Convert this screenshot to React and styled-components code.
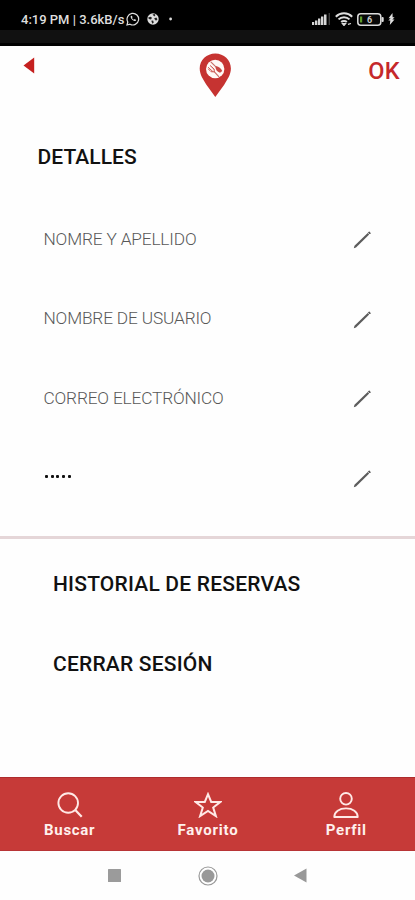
import React from "react";
import styled, { createGlobalStyle } from "styled-components";

const Global = createGlobalStyle`
  * { box-sizing: border-box; }
  body { margin: 0; background: #fefefe; font-family: Roboto, sans-serif; }
  svg { display: block; flex: none; }
`;

const Screen = styled.div`
  width: 415px;
  height: 900px;
  display: flex;
  flex-direction: column;
  overflow: hidden;
  background: #fefefe;
`;

const StatusBar = styled.div`
  flex: none;
  height: 46px;
  padding: 8px 20px 0 21px;
  display: flex;
  justify-content: space-between;
  align-items: flex-start;
  color: #dedede;
  background: linear-gradient(#000 30px, #111 30px, #111 43px, #000 43px);
`;

const StatusGroup = styled.div`
  display: flex;
  align-items: center;
  height: 22px;
  gap: ${(p) => p.$gap}px;
`;

const Clock = styled.span`
  font-size: 13px;
  font-weight: 500;
  white-space: nowrap;
  letter-spacing: 0;
  margin-right: -5px;
`;

const Header = styled.header`
  flex: none;
  height: 84px;
  padding: 7px 15px 0 23px;
  display: grid;
  grid-template-columns: 176px 34px 1fr;
  align-items: start;
`;

const BackButton = styled.button`
  border: 0;
  padding: 4px 0 0;
  background: none;
  justify-self: start;
`;

const OkButton = styled.button`
  border: 0;
  padding: 4px 0 0;
  background: none;
  justify-self: end;
  color: #c5282b;
  font: 500 23.5px/28px Roboto, sans-serif;
  letter-spacing: 0.3px;
`;

const Details = styled.section`
  flex: none;
  height: 409px;
  padding-top: 13px;
  border-bottom: 3px solid #e5d6d8;
`;

const Heading = styled.h1`
  margin: 0 0 0 37.5px;
  font-size: 21px;
  line-height: 28px;
  font-weight: 500;
  color: #111;
  letter-spacing: 0.05px;
`;

const Fields = styled.div`
  margin-top: 28px;
`;

const Field = styled.div`
  height: 79.6px;
  padding: 0 44px 0 43.5px;
  display: flex;
  align-items: center;
  justify-content: space-between;

  > svg {
    margin-top: 3px;
  }
`;

const FieldLabel = styled.span`
  font-size: 17.3px;
  line-height: 24px;
  font-weight: 300;
  color: #585858;
  letter-spacing: -0.17px;
`;

const Password = styled.span`
  display: flex;
  gap: 2.9px;
  padding-left: 1.2px;
  margin-top: -2px;
`;

const Dot = styled.i`
  width: 3px;
  height: 3.6px;
  border-radius: 1px;
  background: #111;
`;

const Links = styled.nav`
  flex: 1;
  padding: 5.5px 0 0 53px;
`;

const MenuLink = styled.a`
  display: flex;
  align-items: center;
  height: 79.5px;
  font-size: 21px;
  font-weight: 500;
  color: #111;
  letter-spacing: 0.2px;
`;

const TabBar = styled.nav`
  flex: none;
  height: 74px;
  padding: 14px 0 0 0.5px;
  display: grid;
  grid-template-columns: repeat(3, 138.3px);
  background: #c63a38;
  border-top: 1px solid #ad2c2d;
  border-bottom: 1px solid #b83436;
`;

const Tab = styled.a`
  display: flex;
  flex-direction: column;
  align-items: center;
  color: #ffe9e6;
`;

const TabLabel = styled.span`
  margin-top: 3px;
  font-size: 15px;
  line-height: 18px;
  font-weight: 700;
  color: #fff0ed;
  letter-spacing: ${(p) => p.$track}px;
`;

const SystemBar = styled.div`
  flex: none;
  height: 49px;
  display: grid;
  grid-template-columns: repeat(3, 93px);
  justify-content: center;
  justify-items: center;
  align-items: center;
`;

const WhatsappIcon = () => (
  <svg width="14" height="14" viewBox="0 0 14 14" fill="none" stroke="#ddd">
    <path d="M1 13l.8-3A5.8 5.8 0 1 1 4 12.2z" strokeWidth="1.2" />
    <path d="M4.8 4.1c-.9 1.9 2.4 5.3 4.7 5l.7-1.2-1.6-.9-.8.7C7 7.4 6.4 6.7 6 6l.6-.8-.7-1.4z" fill="#ddd" stroke="none" />
  </svg>
);

const GlobeIcon = () => (
  <svg width="12" height="12" viewBox="0 0 12 12">
    <circle cx="6" cy="6" r="5.7" fill="#ddd" />
    <path d="M1.2 4.5l2.3-.8 1.5 1-1 1.7-2.2-.4zM5.5 1.500l2-.6 1 1.200-1.200 1.300zM7 5.500l2.300-1 1.200 1.700-1.500 1.600zM4.300 7.800l1.800-.3.7 2-1.500 1.300z" fill="#222" />
  </svg>
);

const NotificationDot = () => (
  <svg width="8" height="4" viewBox="0 0 8 4"><circle cx="4.600" cy="2" r="1.400" fill="#ddd" /></svg>
);

const SignalIcon = () => (
  <svg width="19" height="12" viewBox="0 0 19 12" fill="#d5d5d5">
    <rect x="0" y="9" width="2.200" height="3" />
    <rect x="3" y="7.500" width="2.400" height="4.500" />
    <rect x="6" y="5.500" width="2.400" height="6.500" />
    <rect x="9" y="3.500" width="2.400" height="8.500" />
    <rect x="12" y="1.500" width="2.500" height="10.500" />
    <rect x="16.700" y="0" width="1" height="12" fill="#555" />
  </svg>
);

const WifiIcon = () => (
  <svg width="18" height="14" viewBox="0 0 18 14" fill="none" stroke="#ddd" strokeWidth="2">
    <path d="M.8 4.700C5.400.2 12.600.2 17.200 4.700M3.500 7.400c3-3 8-3 11 0M6.200 10c1.500-1.500 4.100-1.500 5.600 0" />
    <path d="M7.400 11.500h3.200L9 13.500zM13 12.300l3-.8" fill="#ddd" strokeWidth="1.200" />
  </svg>
);

const BatteryIcon = () => (
  <svg width="27" height="13" viewBox="0 0 27 13">
    <rect x=".8" y=".8" width="23" height="11.400" rx="3" fill="#080808" stroke="#ddd" strokeWidth="1.500" />
    <path d="M3 3.500h2.200v6H3z" fill="#5d9c28" />
    <rect x="24.500" y="4" width="2.200" height="5" rx="1" fill="#ddd" />
    <text x="12.700" y="9.700" textAnchor="middle" fontFamily="Roboto" fontSize="9" fontWeight="700" fill="#ccc">6</text>
  </svg>
);

const BoltIcon = () => (
  <svg width="7" height="12" viewBox="0 0 7 12" fill="#ddd">
    <path d="M4.500 0L.5 5.300h2.200L.3 7.500h2L1.800 12l4.700-5.500H4.300l2.300-2.300h-2z" />
  </svg>
);

const Pin = () => (
  <svg width="34" height="45" viewBox="0 0 34 45">
    <path d="M16.300.6C7.700.6.700 7.200.7 15.600c0 6 3.500 11 6.700 16.200L16.300 44l8.900-12.200c3.200-5.200 6.700-10.200 6.700-16.200C31.900 7.200 24.900.6 16.300.6z" fill="#c63331" />
    <circle cx="16.200" cy="16" r="9.200" fill="#fff9f6" />
    <path d="M11.800 8.800l5.600 5.600M14.700 18.200l5.300 5.600" stroke="#c9706a" strokeWidth="1.200" />
    <path d="M16.500 13.500c1.700-1.200 5.600 1.400 6.800 4.400l-2.300 1.800c-2.900-.8-4.700-3.300-4.500-6.200z" fill="#c94844" />
    <path d="M9 14.200l5 4.500M11 12.400l4.500 4.300M9.200 15.800l2.800 2.900 3.400.2-.4-2.800-2.600-2.600" fill="none" stroke="#cf5d57" strokeWidth="1" />
  </svg>
);

const EditIcon = () => (
  <svg width="18" height="18" viewBox="0 0 18 18">
    <path d="M.8 17.200l.7-2.500L14.700 2.100l1.500 1.500L3 16.400z" fill="#5c5c5c" />
    <path d="M15.300 1.500l.8-.7 1.400 1.300-.8.900z" fill="#444" stroke="#444" strokeWidth=".6" />
  </svg>
);

const SearchIcon = () => (
  <svg width="26" height="26" viewBox="0 0 26 26" fill="none" stroke="currentColor" strokeWidth="1.900">
    <circle cx="11.200" cy="11" r="9.800" />
    <path d="M18.300 18l6.400 6.700" strokeWidth="2.200" />
  </svg>
);

const StarIcon = () => (
  <svg width="28" height="26" viewBox="0 0 28 26" fill="none" stroke="currentColor" strokeWidth="2">
    <path d="M14 2.200l3.200 7.700h9.300l-7.300 5.600 2.700 8.600-7.900-5.100-7.900 5.100 2.700-8.600L1.500 9.900h9.300z" />
  </svg>
);

const PersonIcon = () => (
  <svg width="26" height="26" viewBox="0 0 26 26" fill="none" stroke="currentColor" strokeWidth="1.900">
    <circle cx="13" cy="6.800" r="5.800" />
    <path d="M1.300 25c0-5.400 5-8.600 11.700-8.600s11.700 3.200 11.700 8.600z" strokeLinejoin="round" />
  </svg>
);

const fields = [
  { label: "NOMRE Y APELLIDO" },
  { label: "NOMBRE DE USUARIO" },
  { label: "CORREO ELECTRÓNICO" },
  { dots: 5 },
];

const tabs = [
  { label: "Buscar", Icon: SearchIcon, track: 0.7 },
  { label: "Favorito", Icon: StarIcon, track: 0.8 },
  { label: "Perfil", Icon: PersonIcon, track: 0.7 },
];

export default function App() {
  return (
    <Screen>
      <Global />
      <StatusBar>
        <StatusGroup $gap={7}>
          <Clock>4:19 PM | 3.6kB/s</Clock>
          <WhatsappIcon />
          <GlobeIcon />
          <NotificationDot />
        </StatusGroup>
        <StatusGroup $gap={4}>
          <SignalIcon />
          <WifiIcon />
          <BatteryIcon />
          <BoltIcon />
        </StatusGroup>
      </StatusBar>
      <Header>
        <BackButton aria-label="Atrás">
          <svg width="12" height="17" viewBox="0 0 12 17"><path d="M.5 8.500L11.200.5v16z" fill="#c5201f" /></svg>
        </BackButton>
        <Pin />
        <OkButton>OK</OkButton>
      </Header>
      <Details>
        <Heading>DETALLES</Heading>
        <Fields>
          {fields.map((f, i) => (
            <Field key={i}>
              {f.label ? (
                <FieldLabel>{f.label}</FieldLabel>
              ) : (
                <Password>{Array.from({ length: f.dots }, (_, n) => <Dot key={n} />)}</Password>
              )}
              <EditIcon />
            </Field>
          ))}
        </Fields>
      </Details>
      <Links>
        <MenuLink>HISTORIAL DE RESERVAS</MenuLink>
        <MenuLink>CERRAR SESIÓN</MenuLink>
      </Links>
      <TabBar>
        {tabs.map(({ label, Icon, track }) => (
          <Tab key={label}>
            <Icon />
            <TabLabel $track={track}>{label}</TabLabel>
          </Tab>
        ))}
      </TabBar>
      <SystemBar>
        <svg width="13" height="13" viewBox="0 0 13 13"><rect width="13" height="13" rx=".5" fill="#9b9b9b" /></svg>
        <svg width="20" height="20" viewBox="0 0 20 20"><circle cx="10" cy="10" r="9" fill="#fff" stroke="#999" strokeWidth="1.200" /><circle cx="10" cy="10" r="6.500" fill="#999" /></svg>
        <svg width="13" height="15" viewBox="0 0 13 15"><path d="M0 7.500L12.500.5v14z" fill="#989898" /></svg>
      </SystemBar>
    </Screen>
  );
}
